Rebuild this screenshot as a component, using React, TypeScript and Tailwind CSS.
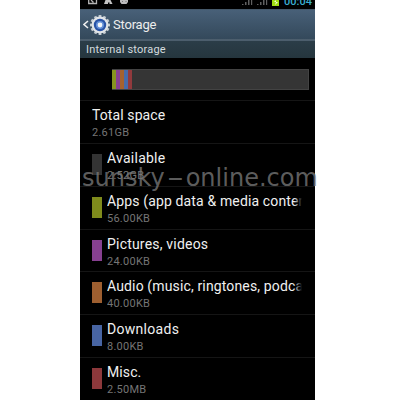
import React from "react";

type Item = { name: string; size: string; swatch?: string; spacing: string };

const items: Item[] = [
  { name: "Total space", size: "2.61GB", spacing: "tracking-[0.1px]" },
  { name: "Available", size: "2.52GB", swatch: "bg-[#343434]", spacing: "tracking-[0.25px]" },
  { name: "Apps (app data & media content)", size: "56.00KB", swatch: "bg-[#7f8b1c]", spacing: "tracking-[0.14px]" },
  { name: "Pictures, videos", size: "24.00KB", swatch: "bg-[#874091]", spacing: "tracking-[0.2px]" },
  { name: "Audio (music, ringtones, podcasts)", size: "40.00KB", swatch: "bg-[#9e5f30]", spacing: "tracking-[0.14px]" },
  { name: "Downloads", size: "8.00KB", swatch: "bg-[#4865a3]", spacing: "tracking-[0.3px]" },
  { name: "Misc.", size: "2.50MB", swatch: "bg-[#8c383b]", spacing: "tracking-[0.1px]" },
];

function StatusBar() {
  return (
    <div className="flex h-[9px] shrink-0 items-start overflow-hidden bg-black">
      <svg className="ml-[8px] h-[5px] w-[42px]" viewBox="0 0 42 5">
        <path d="M.7 0v3.5h7.8V0M3 0l2.5 2.5" fill="none" stroke="#b5b5b5" strokeWidth="1.3" />
        <path d="M17.5 0h5l2 4h-3V2.500h-1.500V4h-4z" fill="#c4c4c4" />
        <path d="M32 0h8v2L38.500 4h-5L32 2z" fill="#bdbdbd" />
        <path d="M34 1h1v1h-1zM37.500 1h1v1h-1z" fill="#777" />
      </svg>
      <svg className="ml-auto h-[7px] w-[40px]" viewBox="0 0 40 7">
        <path d="M1 5V4h1.5v1zM4 5V2h1.5v3zM7 5V0h1.5v5zM10 5V0h1.2v5zM16 5V4h1.5v1zM19 5V2h1.5v3zM22 5V0h1.5v5zM25 5V0h1.2v5z" fill="#606060" />
        <path d="M31 0h7v6h-7z" fill="#a1df13" />
        <path d="M35 0l-2 2h2l-1 3 3-3h-2V0z" fill="#f4ffd9" />
      </svg>
      <span className="-mt-[5px] mr-[3px] ml-[3px] w-[28px] text-[11px] leading-[14px] font-medium text-[#3aaed0]">00:04</span>
    </div>
  );
}

function Gear() {
  return (
    <svg className="h-[22px] w-[22px] shrink-0" viewBox="0 0 22 22">
      {[0, 30, 60, 90, 120, 150].map((angle) => (
        <path key={angle} d="M9.6 1h2.8v20H9.6z" fill="#c6ccd2" transform={`rotate(${angle} 11 11)`} />
      ))}
      <circle cx="11" cy="11" r="8.4" fill="#e1e4e7" />
      <circle cx="11" cy="11" r="6.200" fill="#2852a6" />
      <circle cx="11" cy="11" r="4" fill="#6590d8" />
      <circle cx="11" cy="11" r="2.400" fill="#f1f5fa" />
    </svg>
  );
}

function Row({ item }: { item: Item }) {
  return (
    <div className="flex h-[42.86px] shrink-0 border-t border-[#151515] pl-[12px]">
      {item.swatch && <div className={`mt-[10px] mr-[5px] h-[21px] w-[10px] shrink-0 ${item.swatch}`} />}
      <div className="relative mt-[6px] w-[195px] overflow-hidden whitespace-nowrap">
        <div className={`text-[14px] leading-[17px] text-[#f0f0f0] ${item.spacing}`}>{item.name}</div>
        <div className="mt-[2px] text-[11px] leading-[13px] tracking-[0.25px] text-[#757575]">{item.size}</div>
        {item.swatch && <div className="absolute top-0 right-0 h-[18px] w-[8px] bg-gradient-to-r from-transparent to-black" />}
      </div>
    </div>
  );
}

export default function App() {
  return (
    <div className="relative h-[400px] w-[400px] overflow-hidden bg-white font-['Roboto','Liberation_Sans',sans-serif]">
      <div className="ml-[80px] flex h-[400px] w-[235px] flex-col overflow-hidden bg-black">
        <StatusBar />
        <header className="flex h-[30px] shrink-0 items-center border-t border-[#46596a] bg-gradient-to-b from-[#486078] to-[#34495b] pl-[3px]">
          <svg className="h-[9px] w-[6px] shrink-0" viewBox="0 0 6 9">
            <path d="M5 1L1 4.5 5 8" fill="none" stroke="#eee" strokeWidth="1.6" />
          </svg>
          <Gear />
          <span className="ml-[2px] text-[13px] leading-[18px] tracking-[-0.2px] text-[#ededed]">Storage</span>
        </header>
        <div className="h-[19px] shrink-0 border-t-2 border-[#4c5e6d] bg-gradient-to-b from-[#2b3d48] to-[#25363e] pl-[6px] text-[11px] leading-[18px] tracking-[0.2px] text-[#d5dcdf]">
          Internal storage
        </div>
        <div className="h-[42px] shrink-0 pt-[11px] pl-[32px]">
          <div className="flex h-[21px] w-[197px] border border-l-0 border-[#434343] bg-[#353535]">
            <div className="w-[4px] bg-[#87941f]" />
            <div className="w-[4px] bg-[#874091]" />
            <div className="w-[4px] bg-[#a5622f]" />
            <div className="w-[4px] bg-[#486ba9]" />
            <div className="w-[4px] bg-[#913a3d]" />
          </div>
        </div>
        {items.map((item) => <Row key={item.name} item={item} />)}
      </div>
      <div className="absolute top-[164px] left-[82px] flex font-['DejaVu_Sans',sans-serif] text-[24px] leading-[28px] whitespace-nowrap text-[#777777]/80">
        <span>sunsky</span>
        <span className="w-[21px] scale-x-[2] text-center">-</span>
        <span>online.com</span>
      </div>
    </div>
  );
}
